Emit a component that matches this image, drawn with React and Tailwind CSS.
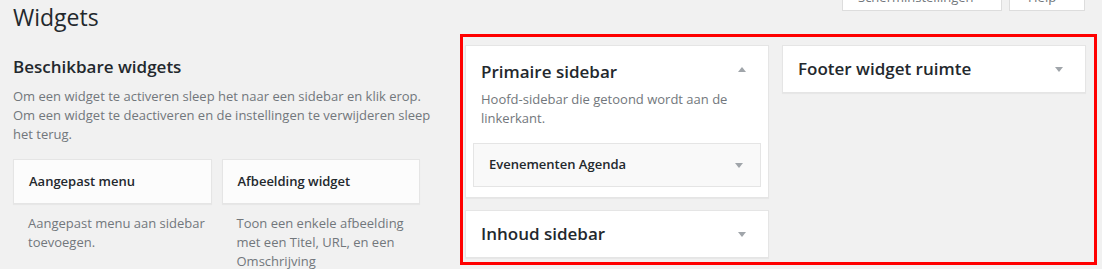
import React from 'react';

const font = { fontFamily: '"Open Sans", "Liberation Sans", sans-serif' };

function Arrow({ up }) {
  return up ? (
    <span className="block w-0 h-0 border-x-[4px] border-x-transparent border-b-[5px] border-b-[#a0a5aa]" />
  ) : (
    <span className="block w-0 h-0 border-x-[4px] border-x-transparent border-t-[5px] border-t-[#a0a5aa]" />
  );
}

function WidgetTile({ title, description }) {
  return (
    <div className="w-[200px]">
      <div className="h-[45px] bg-[#fcfcfc] border border-[#e5e5e5] shadow-[0_1px_1px_rgba(0,0,0,0.04)] px-[15px] flex items-center">
        <span className="text-[13px] font-semibold text-[#23282d]">{title}</span>
      </div>
      <p className="mt-[10px] pl-[15px] pr-[4px] text-[13px] leading-[19px] text-[#72777c]">{description}</p>
    </div>
  );
}

function SidebarHeader({ title, up }) {
  return (
    <div className="h-[46px] pl-[15px] pr-[22px] flex items-center justify-between">
      <h3 className="text-[17px] leading-[24px] font-semibold text-[#23282d]">{title}</h3>
      <Arrow up={up} />
    </div>
  );
}

export default function App() {
  return (
    <div className="w-[1102px] h-[269px] overflow-hidden bg-[#f1f1f1] text-[#23282d]" style={font}>
      <div className="flex items-start">
        {/* left column: available widgets */}
        <div className="w-[407px] ml-[13px]">
          <h1 className="pt-[3px] text-[23px] leading-[29px] font-normal">Widgets</h1>
          <h2 className="mt-[23px] text-[17px] leading-[24px] font-semibold">Beschikbare widgets</h2>
          <p className="mt-[8px] w-[430px] text-[13px] leading-[19px] text-[#72777c]">
            Om een widget te activeren sleep het naar een sidebar en klik erop.
            <br />
            Om een widget te deactiveren en de instellingen te verwijderen sleep het terug.
          </p>
          <div className="mt-[15px] flex gap-[10px]">
            <WidgetTile title="Aangepast menu" description="Aangepast menu aan sidebar toevoegen." />
            <WidgetTile title="Afbeelding widget" description="Toon een enkele afbeelding met een Titel, URL, en een Omschrijving" />
          </div>
        </div>

        {/* right column: sidebars */}
        <div className="ml-[40px] w-[637px]">
          <div className="-mt-[17px] pr-[12px] flex justify-end gap-[7px]">
            <button className="w-[160px] h-[28px] pl-[15px] pt-[5px] flex items-start bg-white border border-[#ddd] border-t-0 text-[13px] leading-[19px] text-[#72777c]">
              Scherminstellingen
            </button>
            <button className="w-[76px] h-[28px] pl-[18px] pt-[5px] flex items-start bg-white border border-[#ddd] border-t-0 text-[13px] leading-[19px] text-[#72777c]">
              Help
            </button>
          </div>

          <div className="mt-[23px] border-[3px] border-[#ff0000] pl-[2px] pt-[8px] pr-[8px] pb-[4px] flex gap-[13px] items-start">
            <div className="w-[304px] flex flex-col gap-[12px]">
              <div className="bg-white border border-[#e5e5e5] shadow-[0_1px_1px_rgba(0,0,0,0.04)] pb-[10px]">
                <div className="pt-[14px] pl-[15px] pr-[22px] flex items-center justify-between">
                  <h3 className="text-[17px] leading-[24px] font-semibold">Primaire sidebar</h3>
                  <span className="-mt-[6px]"><Arrow up /></span>
                </div>
                <p className="mt-[6px] px-[15px] text-[13px] leading-[19px] text-[#72777c]">
                  Hoofd-sidebar die getoond wordt aan de linkerkant.
                </p>
                <div className="mt-[15px] mx-[7px] h-[44px] bg-[#f9f9f9] border border-[#e5e5e5] pl-[15px] pr-[17px] flex items-center justify-between">
                  <span className="text-[13px] font-semibold">Evenementen Agenda</span>
                  <Arrow />
                </div>
              </div>
              <div className="bg-white border border-[#e5e5e5] shadow-[0_1px_1px_rgba(0,0,0,0.04)]">
                <SidebarHeader title="Inhoud sidebar" />
              </div>
            </div>
            <div className="w-[304px] bg-white border border-[#e5e5e5] shadow-[0_1px_1px_rgba(0,0,0,0.04)]">
              <SidebarHeader title="Footer widget ruimte" />
            </div>
          </div>
        </div>
      </div>
    </div>
  );
}
